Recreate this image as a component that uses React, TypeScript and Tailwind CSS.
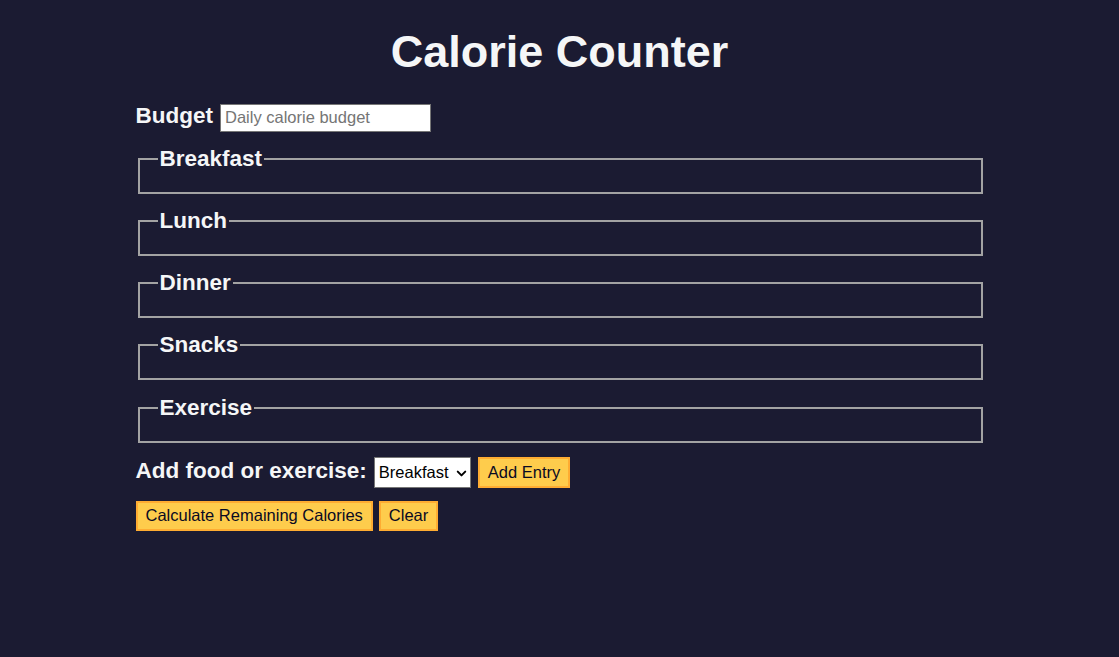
import React from "react";
import { ChevronDown } from "lucide-react";

const meals = ["Breakfast", "Lunch", "Dinner", "Snacks", "Exercise"];

export default function App() {
  return (
    <div className="min-h-screen bg-[#1b1b32] font-['Liberation_Sans',Arial,sans-serif] text-[#f5f6f7]">
      <h1 className="pt-[26px] text-center text-[45px] font-bold leading-[52px]">
        Calorie Counter
      </h1>

      <form className="mx-auto w-[848px]" onSubmit={(e) => e.preventDefault()}>
        <div className="mt-[25px] flex items-baseline gap-[7px]">
          <label
            htmlFor="budget"
            className="text-[22.5px] font-bold leading-[26px]"
          >
            Budget
          </label>
          <input
            id="budget"
            type="number"
            placeholder="Daily calorie budget"
            className="h-[28px] w-[211px] border border-[#767676] bg-white px-[4px] text-[16.5px] text-black placeholder:text-[#757575]"
          />
        </div>

        <div className="mt-[14px]">
          {meals.map((meal) => (
            <fieldset
              key={meal}
              className="mb-[14.25px] ml-[2px] mr-px border-2 border-[#a3a3a3] px-[18px] pb-[20px]"
            >
              <legend className="px-[2px] text-[22.5px] font-bold leading-[26px]">
                {meal}
              </legend>
            </fieldset>
          ))}
        </div>

        <div className="mt-px flex items-baseline gap-[7px]">
          <label
            htmlFor="entry-dropdown"
            className="text-[22.5px] font-bold leading-[26px]"
          >
            Add food or exercise:
          </label>
          <div className="relative">
            <select
              id="entry-dropdown"
              defaultValue="breakfast"
              className="h-[31px] w-[97px] appearance-none rounded-none border border-[#767676] bg-white pl-[4px] text-[16.5px] text-black"
            >
              <option value="breakfast">Breakfast</option>
              <option value="lunch">Lunch</option>
              <option value="dinner">Dinner</option>
              <option value="snacks">Snacks</option>
              <option value="exercise">Exercise</option>
            </select>
            {/* chevron drawn over the native select */}
            <ChevronDown
              size={15}
              strokeWidth={3.2}
              className="pointer-events-none absolute right-[2px] top-[9px] text-black"
            />
          </div>
          <button
            type="button"
            className="h-[31px] border-2 border-[#feac32] bg-[#fecc4c] px-[8px] text-[16.5px] text-[#0a0a23]"
          >
            Add Entry
          </button>
        </div>

        <div className="mt-[13px] flex gap-[6px]">
          <button
            type="submit"
            className="h-[30px] border-2 border-[#feac32] bg-[#fecc4c] px-[8px] text-[16.5px] text-[#0a0a23]"
          >
            Calculate Remaining Calories
          </button>
          <button
            type="button"
            className="h-[30px] border-2 border-[#feac32] bg-[#fecc4c] px-[8px] text-[16.5px] text-[#0a0a23]"
          >
            Clear
          </button>
        </div>
      </form>
    </div>
  );
}
